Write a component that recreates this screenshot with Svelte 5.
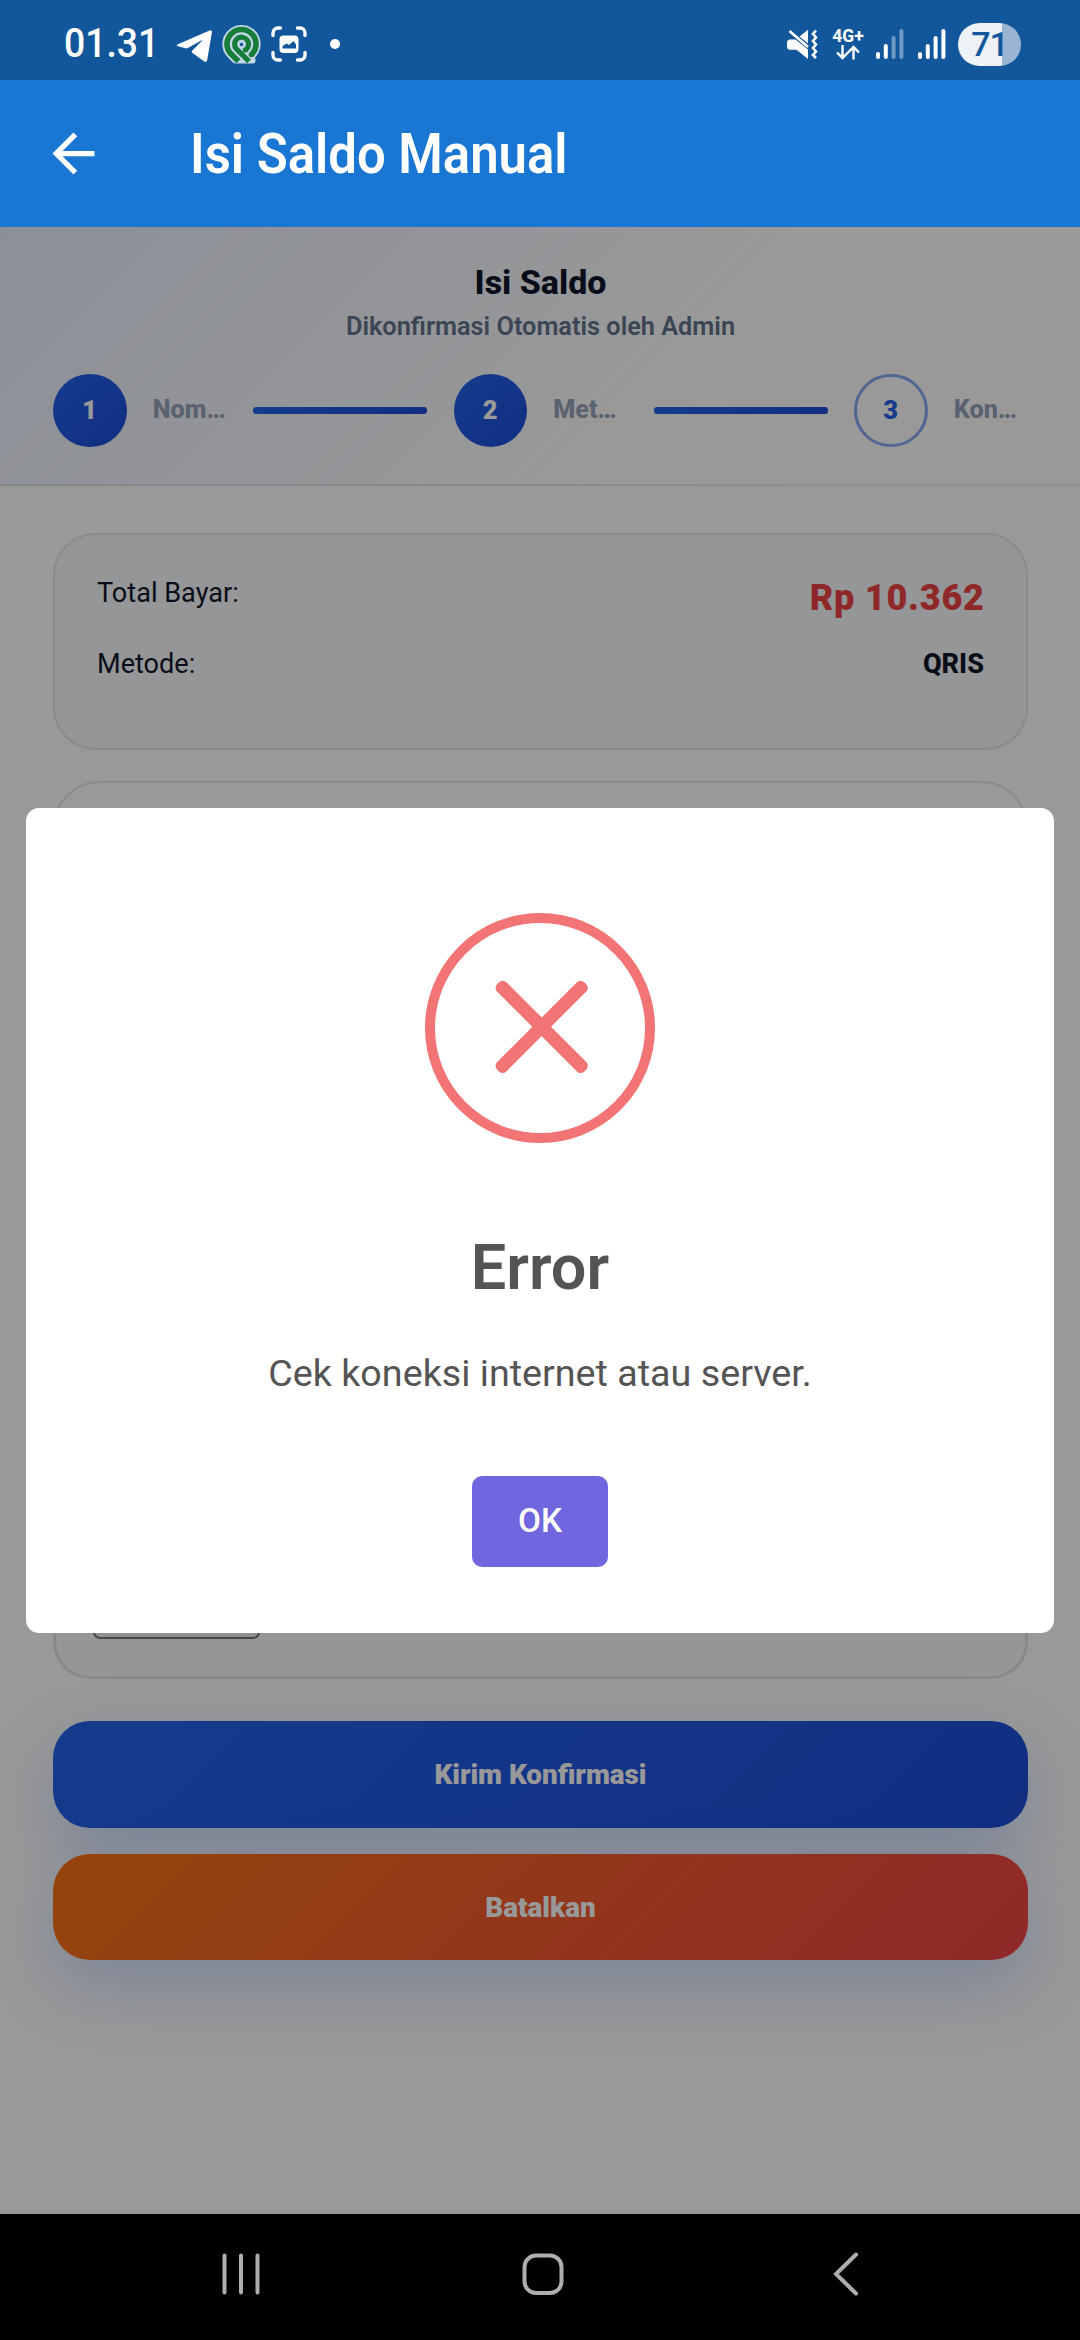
<script lang="ts">
  interface Step {
    number: number;
    label: string;
    done: boolean;
  }

  const steps: Step[] = [
    { number: 1, label: "Nom…", done: true },
    { number: 2, label: "Met…", done: true },
    { number: 3, label: "Kon…", done: false },
  ];

  const signals = [{ level: 2 }, { level: 4 }];
  const barTops = [23, 15, 7, 0];

  let showError = $state(true);
</script>

<div class="screen">
  <div class="status-bar">
    <span class="clock"><span class="clock-text">01.31</span></span>
    <svg class="icon-telegram" width="36" height="32" viewBox="0 0 36 32" fill="#fff">
      <path d="M1.4 14.6 33.6.5c1.5-.6 2.6.2 2.3 2l-4.7 27.6c-.3 1.8-1.5 2.3-2.9 1.4L16.5 23c-1-.8-1-1.6-.1-2.4L26 10.8c.5-.6 0-.9-.7-.4L11.8 18c-.8.5-1.6.5-2.4.2l-8-2.3c-.8-.3-.8-.9 0-1.3z" />
    </svg>
    <svg class="icon-app" width="39" height="39" viewBox="0 0 39 39" fill="none">
      <path d="M19.5 0a19 19 0 0 1 13.5 32.5l.5 3c.2 1.8-.7 3-2.500 3H13.500c-1.300 0-2.300-.5-3.200-1.400l-4.300-4.500A19 19 0 0 1 19.500 0z" fill="#c3d5e6" />
      <path d="M29.5 29.5A14.5 14.5 0 1 0 9.3 29.3L16.5 36.3" stroke="#177d3a" stroke-width="5.6" />
      <path d="M23.5 25A7 7 0 1 0 14.5 24L27 36.3" stroke="#177d3a" stroke-width="5.2" />
      <circle cx="29.5" cy="29.5" r="2.8" fill="#177d3a" />
      <circle cx="23.2" cy="25" r="2.6" fill="#177d3a" />
      <circle cx="19.5" cy="19.5" r="2.8" fill="#12579b" stroke="#c3d5e6" stroke-width="2" />
    </svg>
    <svg class="icon-capture" width="36" height="36" viewBox="0 0 36 36" fill="none" stroke="#fff" stroke-width="3.4" stroke-linecap="round">
      <path d="M2 9.5V7a5 5 0 0 1 5-5h2.5M26.5 2H29a5 5 0 0 1 5 5v2.5M34 26.5V29a5 5 0 0 1-5 5h-2.5M9.5 34H7a5 5 0 0 1-5-5v-2.5" />
      <rect x="8.5" y="9.5" width="19" height="17.5" rx="4" fill="#fff" stroke="none" />
      <path d="M11.5 22.5V20l4-2.5L18 19l4.5-4 2.5 3.5v4z" fill="#12579b" stroke="none" />
    </svg>
    <span class="dot"></span>

    <div class="status-right">
      <svg width="31" height="31" viewBox="0 0 31 31" fill="#fff">
        <path d="M12.5 7.5 21 .8v13.6zM0 14c0-2 1-3.5 3-3.5h5.5L21 20.5V30L9.5 20.8H3c-2 0-3-1.2-3-3z" />
        <path d="M2.5 2 21 18M29 1.5l-3 3.5 3 3.5-3 3.500 3 3.500-3 3.500 3 3.500-3 3.500 3 3" fill="none" stroke="#fff" stroke-width="2.6" />
      </svg>
      <div class="network">
        <span class="network-type">4G+</span>
        <svg width="24" height="15" viewBox="0 0 24 15" fill="none" stroke="#fff" stroke-width="2.4">
          <path d="M6.5 0v13M1 7.5 6.5 13 12 7.500M17.500 14.500V2M12 7.500 17.500 2 23 7.500" />
        </svg>
      </div>
      {#each signals as signal}
        <svg class="signal" width="28" height="30" viewBox="0 0 28 30" fill="#fff">
          {#each barTops as top, i}
            <rect x={i * 7.8} y={top} width="4" height={30 - top} rx="2" opacity={i < signal.level ? 1 : 0.4} />
          {/each}
        </svg>
      {/each}
      <div class="battery">71</div>
    </div>
  </div>

  <header class="app-bar">
    <svg width="63" height="63" viewBox="0 0 24 24" fill="#fff">
      <path d="M20 11H7.830l5.590-5.590L12 4l-8 8 8 8 1.410-1.410L7.830 13H20v-2z" />
    </svg>
    <h1 class="app-title">Isi Saldo Manual</h1>
  </header>

  <main class="page">
    <section class="hero">
      <h2 class="hero-title">Isi Saldo</h2>
      <p class="hero-sub">Dikonfirmasi Otomatis oleh Admin</p>
      <div class="steps">
        {#each steps as step, i}
          {#if i > 0}
            <div class="step-line"></div>
          {/if}
          <div class="step">
            <div class="step-circle" class:step-circle--done={step.done}>{step.number}</div>
            <div class="step-label">{step.label}</div>
          </div>
        {/each}
      </div>
    </section>

    <section class="content">
      <div class="summary">
        <div class="row">
          <span>Total Bayar:</span>
          <strong class="amount">Rp 10.362</strong>
        </div>
        <div class="row">
          <span>Metode:</span>
          <strong class="method">QRIS</strong>
        </div>
      </div>

      <div class="qr-card"></div>
      <div class="upload-card">
        <div class="file-button"></div>
      </div>

      <div class="actions">
        <button class="btn btn--primary">Kirim Konfirmasi</button>
        <button class="btn btn--danger">Batalkan</button>
      </div>
    </section>

    {#if showError}
      <div class="backdrop">
        <div class="modal" role="alertdialog">
          <div class="error-icon">
            <svg width="210" height="210" viewBox="0 0 210 210" fill="#f27474">
              <rect x="45" y="97.2" width="123.4" height="13.2" rx="5.2" transform="rotate(45 106.7 103.8)" />
              <rect x="45" y="97.2" width="123.4" height="13.2" rx="5.2" transform="rotate(-45 106.7 103.8)" />
            </svg>
          </div>
          <h2 class="modal-title">Error</h2>
          <p class="modal-text">Cek koneksi internet atau server.</p>
          <button class="modal-ok" onclick={() => (showError = false)}>OK</button>
        </div>
      </div>
    {/if}
  </main>

  <nav class="nav-bar">
    <svg width="38" height="44" viewBox="0 0 38 44" stroke="#aeaeae" stroke-width="4" stroke-linecap="round">
      <path d="M2.5 3.5v37M19 3.5v37M35.5 3.5v37" />
    </svg>
    <svg class="nav-home" width="42" height="44" viewBox="0 0 42 44" fill="none" stroke="#aeaeae" stroke-width="4">
      <rect x="2.5" y="3.5" width="37" height="37.5" rx="11.5" />
    </svg>
    <svg class="nav-back" width="26" height="44" viewBox="0 0 26 44" fill="none" stroke="#aeaeae" stroke-width="4" stroke-linecap="round">
      <path d="M23 2.5 3 22l20 19.5" />
    </svg>
  </nav>
</div>

<style>
  :global(body) {
    background: #000;
  }

  .screen {
    display: flex;
    flex-direction: column;
    width: 1080px;
    height: 2340px;
    overflow: hidden;
    font-family: Roboto, "Noto Sans", sans-serif;
  }

  .screen * {
    box-sizing: border-box;
  }

  h1,
  h2,
  p {
    margin: 0;
  }

  svg {
    display: block;
    flex: none;
  }

  button {
    border: 0;
    padding: 0;
    font-family: inherit;
  }

  .status-bar {
    display: flex;
    align-items: center;
    height: 80px;
    padding: 8px 59px 0 64px;
    background: #12579b;
    color: #fff;
  }

  .clock {
    width: 112px;
    font-size: 41px;
    font-weight: 500;
    line-height: 48px;
  }

  .clock-text {
    display: inline-block;
    transform: translateY(-1px) scaleX(0.91);
    transform-origin: left;
  }

  .icon-telegram {
    margin-top: 3px;
  }

  .icon-app {
    margin-left: 10px;
  }

  .icon-capture {
    margin-left: 10px;
  }

  .dot {
    width: 10px;
    height: 10px;
    margin-left: 23px;
    border-radius: 50%;
    background: #fff;
  }

  .status-right {
    display: flex;
    align-items: center;
    margin-left: auto;
  }

  .network {
    display: flex;
    flex-direction: column;
    align-items: center;
    width: 34px;
    margin-left: 13px;
  }

  .network-type {
    font-size: 17.5px;
    font-weight: 700;
    line-height: 17px;
  }

  .signal {
    margin-left: 11px;
  }

  .signal + .signal {
    margin-left: 14px;
  }

  .battery {
    width: 63px;
    height: 43px;
    margin-left: 12px;
    border-radius: 22px;
    background: linear-gradient(90deg, #edf2f7 44px, #99b5d1 44px);
    color: #12579b;
    font-size: 34px;
    font-weight: 500;
    line-height: 43px;
    text-align: center;
    letter-spacing: -1px;
  }

  .app-bar {
    display: flex;
    align-items: center;
    height: 147px;
    padding-left: 42px;
    background: #1976d2;
    color: #fff;
  }

  .app-title {
    margin-left: 85px;
    font-size: 55px;
    font-weight: 600;
    line-height: 64px;
    white-space: nowrap;
    transform: scaleX(0.925);
    transform-origin: left;
  }

  .page {
    position: relative;
    flex: 1;
    background: #fff;
    color: #0f172a;
  }

  .hero {
    padding: 35px 52px 37px 53px;
    border-bottom: 2px solid rgba(15, 23, 42, 0.08);
    background: linear-gradient(135deg, rgba(37, 99, 235, 0.1), rgba(37, 99, 235, 0) 60%);
    text-align: center;
  }

  .hero-title {
    font-size: 34px;
    font-weight: 800;
    line-height: 40px;
  }

  .hero-sub {
    margin-top: 10px;
    color: #64748b;
    font-size: 25.3px;
    font-weight: 600;
    line-height: 30px;
  }

  .steps {
    display: flex;
    align-items: center;
    gap: 26.25px;
    margin-top: 31.5px;
  }

  .step {
    display: flex;
    flex: 1 1 0;
    align-items: center;
    gap: 26.25px;
    min-width: 0;
  }

  .step-circle {
    display: flex;
    flex: none;
    align-items: center;
    justify-content: center;
    width: 73.5px;
    height: 73.5px;
    padding-bottom: 1px;
    border: 3px solid rgba(37, 99, 235, 0.55);
    border-radius: 50%;
    color: #2563eb;
    font-size: 25.5px;
    font-weight: 900;
  }

  .step-circle--done {
    border-color: transparent;
    background: linear-gradient(135deg, #2563eb, #1d4ed8);
    background-origin: border-box;
    color: #fff;
  }

  .step-label {
    padding-bottom: 1px;
    color: #94a3b8;
    font-size: 25.2px;
    font-weight: 800;
    white-space: nowrap;
  }

  .step-line {
    flex: 1 1 0;
    height: 7px;
    border-radius: 3px;
    background: linear-gradient(135deg, #2563eb, #1d4ed8);
  }

  .content {
    display: flex;
    flex-direction: column;
    padding: 47px 52px 0 53px;
  }

  .summary {
    padding: 42px 42px 40px;
    border: 2px solid rgba(15, 23, 42, 0.1);
    border-radius: 42px;
    background: #f8fafc;
    background-clip: padding-box;
    font-size: 27.1px;
    line-height: 32px;
  }

  .row {
    display: flex;
    justify-content: space-between;
    margin-bottom: 28px;
  }

  .amount {
    color: #ef4444;
    font-size: 36px;
    font-weight: 900;
    line-height: 43px;
    letter-spacing: 0.8px;
    margin-right: -0.8px;
  }

  .method {
    font-weight: 800;
  }

  .qr-card {
    height: 640px;
    margin-top: 31px;
    border: 2px solid rgba(15, 23, 42, 0.1);
    border-radius: 47px;
  }

  .upload-card {
    display: flex;
    align-items: flex-end;
    height: 216px;
    margin-top: 42px;
    padding: 37px;
    border: 3px solid #e2e5ea;
    border-radius: 37px;
    background: #fbfbfd;
  }

  .file-button {
    width: 167px;
    height: 56px;
    border: 2px solid #767676;
    border-radius: 7px;
    background: #efefef;
  }

  .actions {
    display: flex;
    flex-direction: column;
    gap: 26px;
    margin-top: 42px;
  }

  .btn {
    height: 106.5px;
    padding-top: 1px;
    border-radius: 37px;
    color: #fff;
    font-size: 27.8px;
    font-weight: 900;
    box-shadow: 0 26px 68px rgba(37, 99, 235, 0.22);
  }

  .btn--primary {
    background: linear-gradient(135deg, #2563eb, #1d4ed8);
  }

  .btn--danger {
    background: linear-gradient(135deg, #f97316, #ef4444);
  }

  .backdrop {
    position: absolute;
    inset: 0;
    display: flex;
    align-items: center;
    justify-content: center;
    background: rgba(0, 0, 0, 0.4);
  }

  .modal {
    display: flex;
    flex-direction: column;
    align-items: center;
    width: 1028px;
    padding: 105px 0 66px;
    border-radius: 13px;
    background: #fff;
    color: #545454;
  }

  .error-icon {
    width: 230px;
    height: 230px;
    border: 10px solid #f27474;
    border-radius: 50%;
  }

  .modal-title {
    margin-top: 87px;
    font-size: 63px;
    font-weight: 600;
    line-height: 76px;
  }

  .modal-text {
    margin-top: 39px;
    font-size: 37.7px;
    line-height: 56px;
  }

  .modal-ok {
    width: 136px;
    height: 91px;
    margin-top: 75px;
    padding-bottom: 2px;
    border-radius: 10px;
    background: #7066e0;
    color: #fff;
    font-size: 33.3px;
    font-weight: 500;
  }

  .nav-bar {
    display: flex;
    align-items: center;
    height: 126px;
    padding: 0 0 6px 222px;
    background: #000;
  }

  .nav-home {
    margin-left: 262px;
  }

  .nav-back {
    margin-left: 269px;
  }
</style>
